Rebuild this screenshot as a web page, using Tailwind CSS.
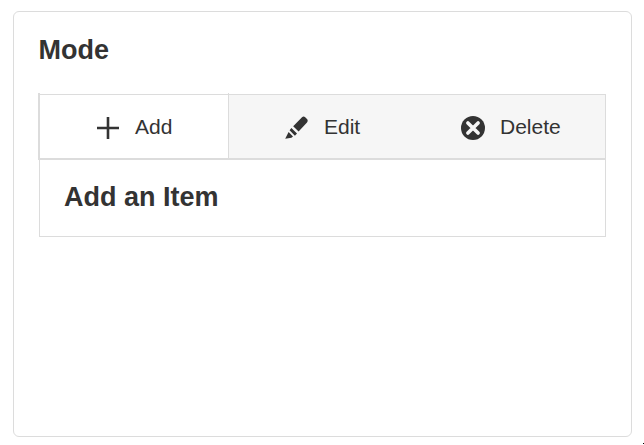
<!DOCTYPE html>
<html lang="en">
<head>
<meta charset="utf-8">
<title>Mode</title>
<script src="https://cdn.jsdelivr.net/npm/@tailwindcss/browser@4"></script>
</head>
<body class="relative h-[445px] overflow-hidden bg-white pl-[13px] pt-[11px] text-[#333] font-['Liberation_Sans',Arial,sans-serif]">
<main class="flex h-[426px] w-[619px] flex-col rounded-[6px] border border-[#dcdcdc] pl-6 pr-[25px] pt-[23px]">
  <h1 class="h-[58px] pl-[0.5px] text-[27px] font-bold leading-[31px]">Mode</h1>
  <div role="tablist" class="flex h-[67px] w-[568px] shrink-0 border-b-2 border-[#dcdcdc] text-[21px] leading-6">
    <div class="w-[2px] bg-[#dcdcdc]"></div>
    <button class="mt-px flex w-[188px] items-center border-t border-[#dcdcdc] pl-[57px]">
      <svg class="mr-[16px] mt-[3px] h-[22px] w-[22px]" viewBox="0 0 22 22"><path d="M0 11H22M11 0V22" stroke="#333" stroke-width="2.6"/></svg>
      <span>Add</span>
    </button>
    <div class="w-px bg-[#dcdcdc]"></div>
    <div class="mt-px flex grow border-r border-t border-[#dcdcdc] bg-[#f6f6f6]">
      <button class="flex w-[188px] items-center pl-[56px]">
        <svg class="mr-[16px] mt-[2px] h-6 w-[23px]" viewBox="0 0 23 24" fill="#333"><path d="M8.2 10.2 17 1.2Q18.6-.2 20.2 1.2L22 3Q23.4 4.6 22 6.4L13.6 15.4ZM6.4 12 12 17.6 9.9 19.8 4.6 14.2ZM3.6 16 8 20.6 6.4 21.8 .2 22.8Z"/></svg>
        <span>Edit</span>
      </button>
      <button class="flex grow items-center pl-[44px]">
        <svg class="mr-[15px] mt-[2px] h-6 w-6" viewBox="0 0 24 24"><circle cx="12" cy="12" r="12" fill="#333"/><path d="m6.9 6.9 10.2 10.2M17.1 6.9 6.9 17.1" stroke="#f6f6f6" stroke-width="3.6" stroke-linecap="round"/></svg>
        <span>Delete</span>
      </button>
    </div>
  </div>
  <section role="tabpanel" class="ml-px h-[77px] w-[567px] shrink-0 border border-t-0 border-[#dcdcdc] pl-6 pt-[22px]">
    <h2 class="text-[27px] font-bold leading-[31px]">Add an Item</h2>
  </section>
</main>
<div class="absolute bottom-px right-0 h-px w-px bg-black"></div>
</body>
</html>
